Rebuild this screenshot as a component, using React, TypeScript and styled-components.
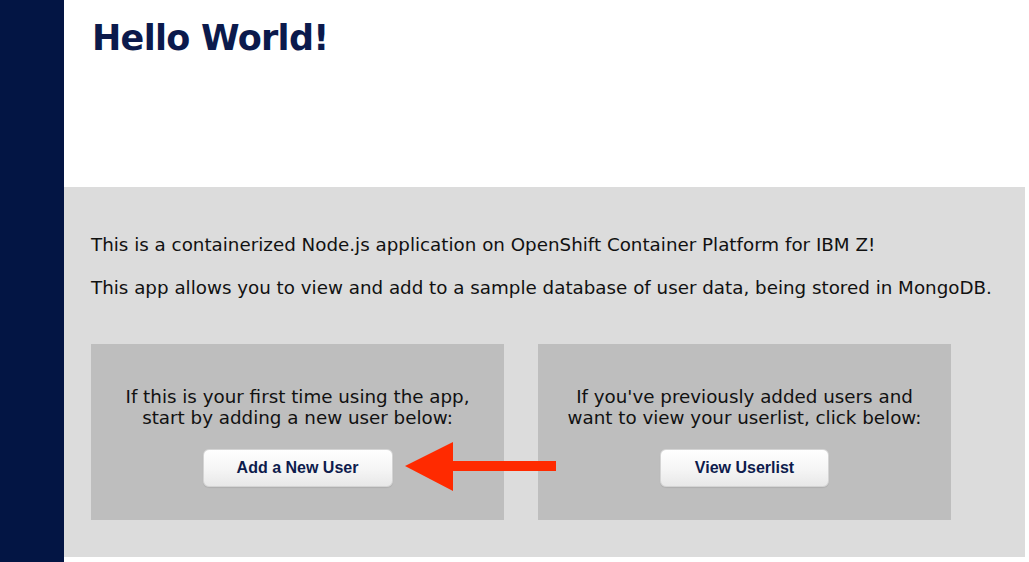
import React from 'react';
import styled, {createGlobalStyle} from 'styled-components';

const GlobalStyle = createGlobalStyle`
  html, body {
    margin: 0;
    padding: 0;
    background: #ffffff;
  }
  body {
    font-family: "DejaVu Sans", Verdana, sans-serif;
  }
`;

const Page = styled.div`
  display: flex;
  width: 1029px;
  height: 562px;
  overflow: hidden;
`;

const Sidebar = styled.div`
  width: 64px;
  flex-shrink: 0;
  background-color: #031544;
`;

const Main = styled.div`
  display: flex;
  flex-direction: column;
  flex-grow: 1;
`;

const Header = styled.header`
  height: 187px;
  padding-left: 28px;
  box-sizing: border-box;
`;

const Title = styled.h1`
  margin: 0;
  padding-top: 18px;
  font-size: 35px;
  font-weight: 700;
  color: #0b1a4c;
  letter-spacing: -0.7px;
`;

const Content = styled.section`
  position: relative;
  height: 370px;
  margin-right: 4px;
  padding: 45px 0 0 27px;
  box-sizing: border-box;
  background-color: #dcdcdc;
`;

const Intro = styled.p`
  margin: 0 0 18px;
  font-size: 18.3px;
  line-height: 25px;
  color: #111111;
`;

const Cards = styled.div`
  display: flex;
  gap: 34px;
  margin-top: 44px;
`;

const Card = styled.div`
  width: 413px;
  height: 176px;
  padding-top: 42px;
  box-sizing: border-box;
  display: flex;
  flex-direction: column;
  align-items: center;
  background-color: #bebebe;
`;

const CardText = styled.p`
  margin: 0;
  font-size: 18.3px;
  line-height: 21px;
  text-align: center;
  color: #111111;
`;

const ActionButton = styled.button<{$width: number}>`
  margin-top: 21px;
  width: ${p => p.$width}px;
  height: 38px;
  border: 1px solid #d4d4d4;
  border-radius: 6px;
  background: linear-gradient(#ffffff, #f6f6f6 50%, #e8e8e8);
  box-shadow: 0 1px 1px rgba(0, 0, 0, 0.08);
  font-family: "Liberation Sans", Arial, sans-serif;
  font-size: 16px;
  font-weight: 700;
  color: #0e1c4d;
  cursor: pointer;
`;

const Arrow = styled.svg`
  position: absolute;
  left: 341px;
  top: 255px;
`;

const App = () => (
  <>
    <GlobalStyle/>
    <Page>
      <Sidebar/>
      <Main>
        <Header>
          <Title>Hello World!</Title>
        </Header>
        <Content>
          <Intro>This is a containerized Node.js application on OpenShift Container Platform for IBM Z!</Intro>
          <Intro>This app allows you to view and add to a sample database of user data, being stored in MongoDB.</Intro>
          <Cards>
            <Card>
              <CardText>If this is your first time using the app,<br/>start by adding a new user below:</CardText>
              <ActionButton $width={190}>Add a New User</ActionButton>
            </Card>
            <Card>
              <CardText>If you've previously added users and<br/>want to view your userlist, click below:</CardText>
              <ActionButton $width={169}>View Userlist</ActionButton>
            </Card>
          </Cards>
          <Arrow width="151" height="49" viewBox="0 0 151 49">
            <polygon points="0,24 48,0 48,19 151,19 151,29 48,29 48,49" fill="#ff2a00"/>
          </Arrow>
        </Content>
      </Main>
    </Page>
  </>
);

export default App;
